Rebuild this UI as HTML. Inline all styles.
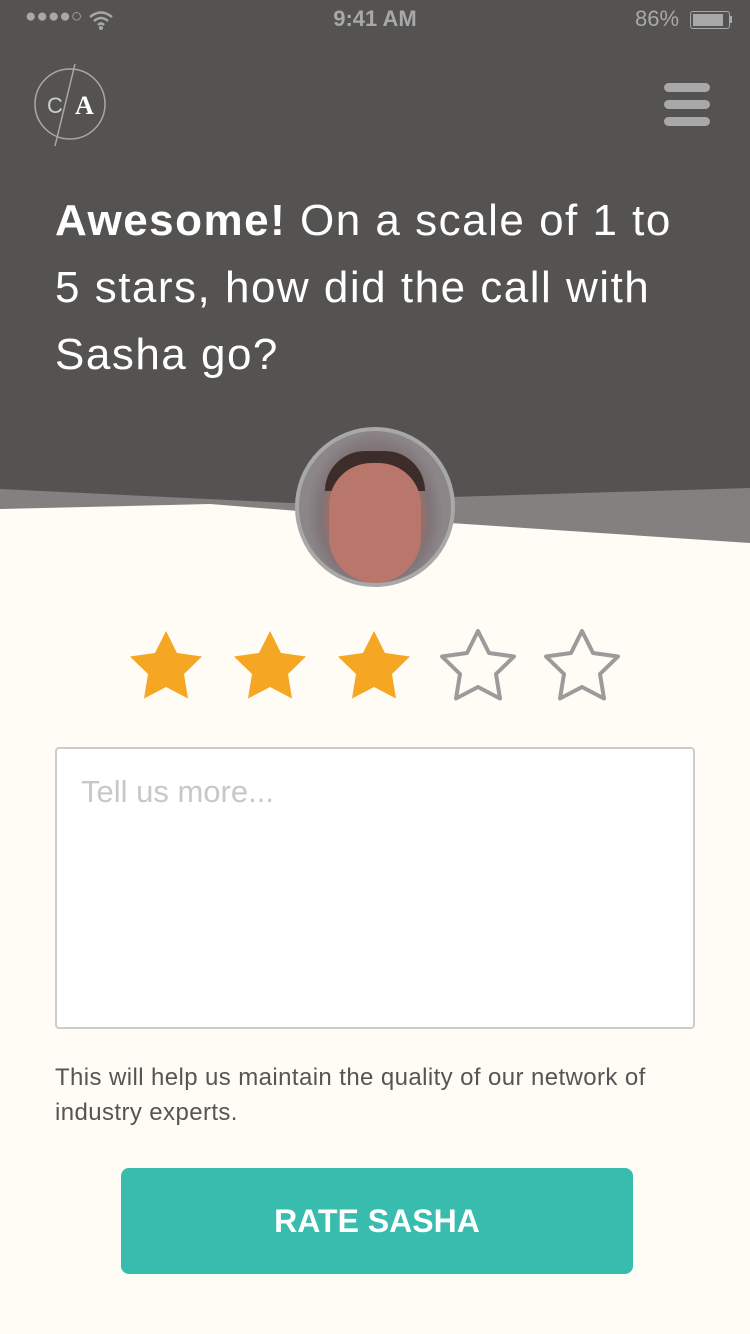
<!DOCTYPE html>
<html><head><meta charset="utf-8"><style>
body{margin:0;width:750px;height:1334px;background:#fefcf4;font-family:"Liberation Sans",sans-serif;position:relative;overflow:hidden}
.abs{position:absolute}
</style></head><body>
<svg class="abs" style="left:0;top:0" width="750" height="560">
<rect width="750" height="560" fill="#545351"/>
<polygon points="0,489 290,503 450,497 750,488 750,560 0,560" fill="#828180"/>
<polygon points="0,509 210,504 450,523 750,543 750,560 0,560" fill="#fefcf4"/>
</svg>
<div class="abs" style="left:25px;top:6px;color:#a8a8a8;font-size:19px;letter-spacing:0px">●●●●○</div>
<svg class="abs" style="left:88px;top:10px" width="26" height="20"><path d="M2 7 Q13 -2 24 7 M6 11 Q13 5 20 11 M10 15 Q13 12 16 15" stroke="#a8a8a8" stroke-width="2.5" fill="none"/><circle cx="13" cy="18" r="2" fill="#a8a8a8"/></svg>
<div class="abs" style="left:0;width:750px;top:6px;text-align:center;color:#a8a8a8;font-size:22px;font-weight:bold">9:41 AM</div>
<div class="abs" style="left:635px;top:6px;color:#a8a8a8;font-size:22px">86%</div>
<div class="abs" style="left:690px;top:11px;width:38px;height:16px;border:1.5px solid #a8a8a8;border-radius:3px"><div style="margin:2px;width:30px;height:12px;background:#a8a8a8"></div></div>
<div class="abs" style="left:730px;top:16px;width:2px;height:7px;background:#a8a8a8"></div>
<svg class="abs" style="left:30px;top:62px" width="82" height="86"><circle cx="40" cy="42" r="35" fill="none" stroke="#a8a8a8" stroke-width="1.5"/><line x1="25" y1="84" x2="45" y2="2" stroke="#a8a8a8" stroke-width="1.5"/><text x="17" y="51" fill="#ccc" font-size="22" font-family="Liberation Sans">C</text><text x="45" y="52" fill="#fff" font-size="26" font-weight="bold" font-family="Liberation Serif">A</text></svg>
<div class="abs" style="left:664px;top:83px;width:46px;height:9px;border-radius:5px;background:#a8a8a8"></div>
<div class="abs" style="left:664px;top:100px;width:46px;height:9px;border-radius:5px;background:#a8a8a8"></div>
<div class="abs" style="left:664px;top:117px;width:46px;height:9px;border-radius:5px;background:#a8a8a8"></div>
<div class="abs" style="left:55px;top:187px;width:690px;color:#fff;font-size:44px;line-height:67px;letter-spacing:1.5px;white-space:nowrap">
<b>Awesome!</b> On a scale of 1 to<br>5 stars, how did the call with<br>Sasha go?</div>
<div class="abs" style="left:295px;top:427px;width:152px;height:152px;border-radius:50%;border:4px solid #a8a8a8;background:radial-gradient(ellipse 45% 55% at 50% 55%,#c47f74 0%,#a86a60 60%,#7f7479 80%,#8c8689 100%);overflow:hidden">
<div style="position:absolute;left:26px;top:20px;width:100px;height:40px;border-radius:50px 50px 0 0;background:#3d2d2a"></div>
<div style="position:absolute;left:30px;top:32px;width:92px;height:120px;border-radius:46px 46px 50px 50px;background:#b8776a"></div>
</div>
<svg class="abs" style="left:120px;top:620px" width="520" height="95">
<defs><path id="s" d="M0,-37 L11,-15 L36,-11.5 L18,6 L22,30.5 L0,19 L-22,30.5 L-18,6 L-36,-11.5 L-11,-15Z" stroke-linejoin="round"/></defs>
<use href="#s" x="46" y="48" fill="#f5a623"/>
<use href="#s" x="150" y="48" fill="#f5a623"/>
<use href="#s" x="254" y="48" fill="#f5a623"/>
<use href="#s" x="358" y="48" fill="none" stroke="#9b9b9b" stroke-width="4"/>
<use href="#s" x="462" y="48" fill="none" stroke="#9b9b9b" stroke-width="4"/>
</svg>
<div class="abs" style="left:55px;top:747px;width:636px;height:278px;background:#fff;border:2px solid #ccc;border-radius:4px"></div>
<div class="abs" style="left:81px;top:774px;color:#c8c8c8;font-size:31px">Tell us more...</div>
<div class="abs" style="left:55px;top:1060px;width:660px;color:#555;font-size:24px;line-height:35px;letter-spacing:0.4px">This will help us maintain the quality of our network of industry experts.</div>
<div class="abs" style="left:121px;top:1168px;width:512px;height:106px;background:#37bcae;border-radius:8px;color:#fff;font-size:32px;font-weight:bold;text-align:center;line-height:106px">RATE SASHA</div>
</body></html>
